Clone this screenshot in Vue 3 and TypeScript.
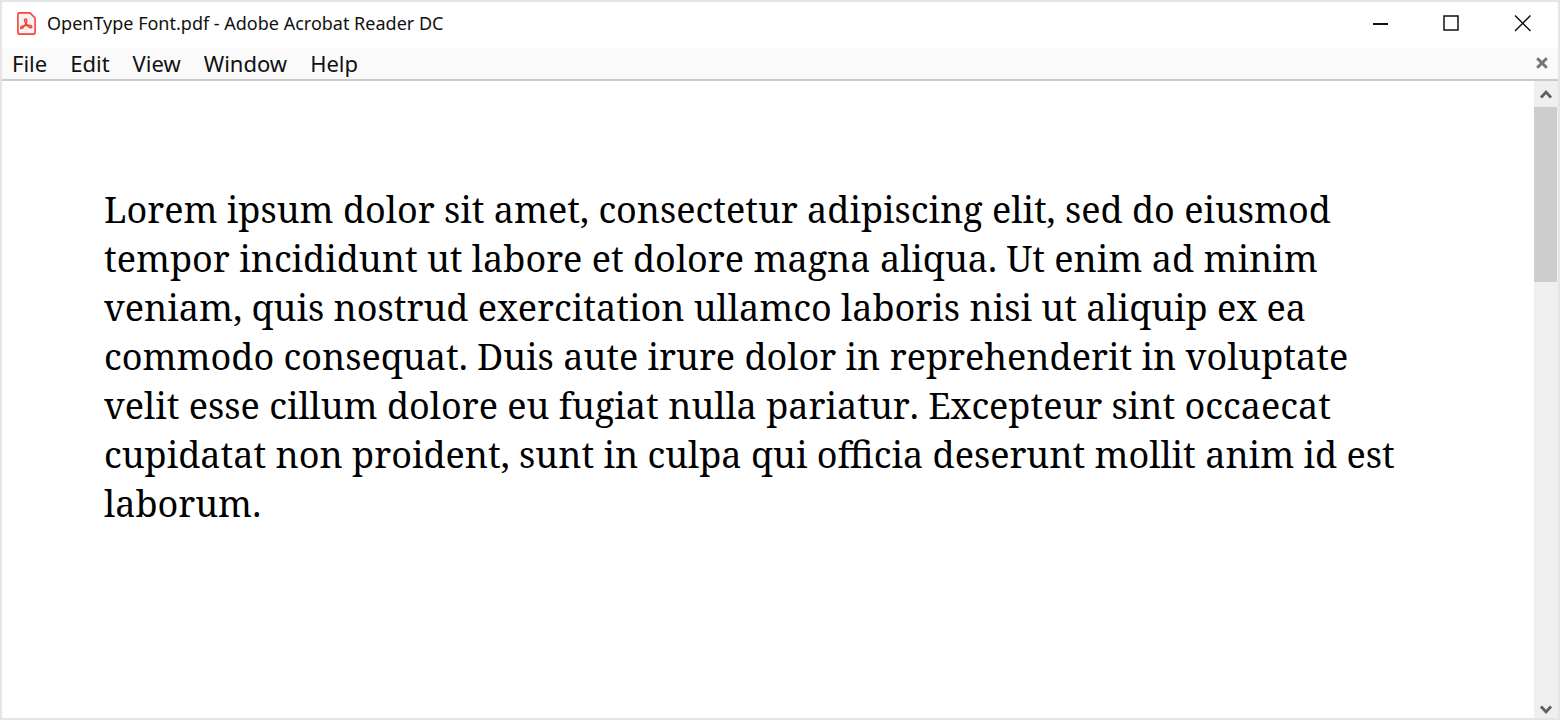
<script setup lang="ts">
const title = 'OpenType Font.pdf - Adobe Acrobat Reader DC'
const menus: string[] = ['File', 'Edit', 'View', 'Window', 'Help']
const body =
  'Lorem ipsum dolor sit amet, consectetur adipiscing elit, sed do eiusmod tempor incididunt ut labore et dolore magna aliqua. Ut enim ad minim veniam, quis nostrud exercitation ullamco laboris nisi ut aliquip ex ea commodo consequat. Duis aute irure dolor in reprehenderit in voluptate velit esse cillum dolore eu fugiat nulla pariatur. Excepteur sint occaecat cupidatat non proident, sunt in culpa qui officia deserunt mollit anim id est laborum.'
</script>

<template>
  <div class="window">
    <header class="titlebar">
      <svg class="app-icon" width="19" height="23" viewBox="0 0 19 23" aria-hidden="true">
        <path d="M2.8 0.9H13L18.1 6V20.2Q18.1 22.1 16.2 22.1H2.8Q0.9 22.1 0.9 20.2V2.8Q0.9 0.9 2.8 0.9Z" fill="#f6f3f2" stroke="#f9403a" stroke-width="1.6" />
        <path
          d="M8.6 10.4C7.2 9 7 7 8.6 6.9C10.3 6.9 10 9 9.1 10.8C8.2 12.8 7.2 14.8 5.8 16C4.6 17 3.4 16.5 3.7 15.4C4.1 14.2 6.2 13.8 8.2 13.5C10.4 13.2 12.6 12.9 14 13.7C15.4 14.5 14.8 16.1 13.4 15.7C11.4 15.2 9.6 12.6 8.6 10.4Z"
          fill="none"
          stroke="#f9403a"
          stroke-width="1.5"
          stroke-linejoin="round"
        />
      </svg>
      <h1 class="title">{{ title }}</h1>
      <div class="controls">
        <button type="button" class="control" aria-label="Minimize">
          <svg width="17" height="17" viewBox="0 0 17 17"><path d="M1 9H16" stroke="#111" stroke-width="2" /></svg>
        </button>
        <button type="button" class="control" aria-label="Maximize">
          <svg width="17" height="17" viewBox="0 0 17 17"><rect x="1" y="1" width="14" height="14" fill="none" stroke="#111" stroke-width="1.5" /></svg>
        </button>
        <button type="button" class="control" aria-label="Close">
          <svg width="17" height="17" viewBox="0 0 17 17"><path d="M1 0.5L16.5 16M16.5 0.5L1 16" stroke="#111" stroke-width="1.5" /></svg>
        </button>
      </div>
    </header>

    <nav class="menubar" aria-label="Menu">
      <button v-for="menu in menus" :key="menu" type="button" class="menu">{{ menu }}</button>
      <button type="button" class="close-doc" aria-label="Close document">
        <svg width="12" height="12" viewBox="0 0 12 12"><path d="M1.2 1.2L10.8 10.8M10.8 1.2L1.2 10.8" stroke="#747474" stroke-width="3" /></svg>
      </button>
    </nav>

    <div class="viewer">
      <main class="page">
        <p class="text">{{ body }}</p>
      </main>
      <div class="scrollbar">
        <button type="button" class="arrow" aria-label="Scroll up">
          <svg width="12" height="10" viewBox="0 0 12 10"><path d="M1 8.6L6 3L11 8.6" fill="none" stroke="#606060" stroke-width="2.8" /></svg>
        </button>
        <div class="track"><div class="thumb"></div></div>
        <button type="button" class="arrow down" aria-label="Scroll down">
          <svg width="12" height="10" viewBox="0 0 12 10"><path d="M1 1.4L6 7L11 1.4" fill="none" stroke="#606060" stroke-width="2.8" /></svg>
        </button>
      </div>
    </div>
  </div>
</template>

<style>
body {
  margin: 0;
}
</style>

<style scoped>
.window {
  display: flex;
  flex-direction: column;
  box-sizing: border-box;
  min-height: 100vh;
  border: 2px solid #e5e5e5;
  background: #fff;
  color: #111;
  font-family: 'Noto Sans', 'Open Sans', sans-serif;
}
button {
  margin: 0;
  padding: 0;
  border: 0;
  background: none;
  color: inherit;
  font: inherit;
}
svg {
  display: block;
  flex: none;
}
.titlebar {
  display: flex;
  align-items: center;
  box-sizing: border-box;
  height: 46px;
  padding: 0 0 4px 15px;
}
.app-icon {
  margin-right: 11px;
}
.title {
  flex: 1;
  margin: 0;
  font-size: 18px;
  font-weight: 400;
  line-height: 24px;
}
.controls {
  display: flex;
  align-self: stretch;
}
.control {
  display: flex;
  align-items: center;
  justify-content: center;
  width: 71px;
}
.menubar {
  display: flex;
  align-items: center;
  gap: 23px;
  box-sizing: border-box;
  height: 33px;
  padding: 0 10px 2px;
  border-bottom: 2px solid #cbcbcb;
  background: #fafafa;
}
.menu {
  font-size: 22px;
  line-height: 30px;
}
.close-doc {
  margin-left: auto;
}
.viewer {
  display: flex;
  flex: 1;
}
.page {
  flex: 1;
  padding: 104px 120px 104px 102px;
}
.text {
  margin: 0;
  color: #000;
  font-family: 'Noto Serif', 'Liberation Serif', serif;
  font-size: 36px;
  font-kerning: none;
  line-height: 49px;
}
.scrollbar {
  display: flex;
  flex-direction: column;
  width: 24px;
  background: #efefef;
}
.arrow {
  display: flex;
  align-items: center;
  justify-content: center;
  height: 26px;
  padding-right: 1px;
}
.arrow.down {
  height: 16px;
}
.track {
  flex: 1;
}
.thumb {
  height: 175px;
  margin-right: 1px;
  background: #cdcdcd;
}
</style>
